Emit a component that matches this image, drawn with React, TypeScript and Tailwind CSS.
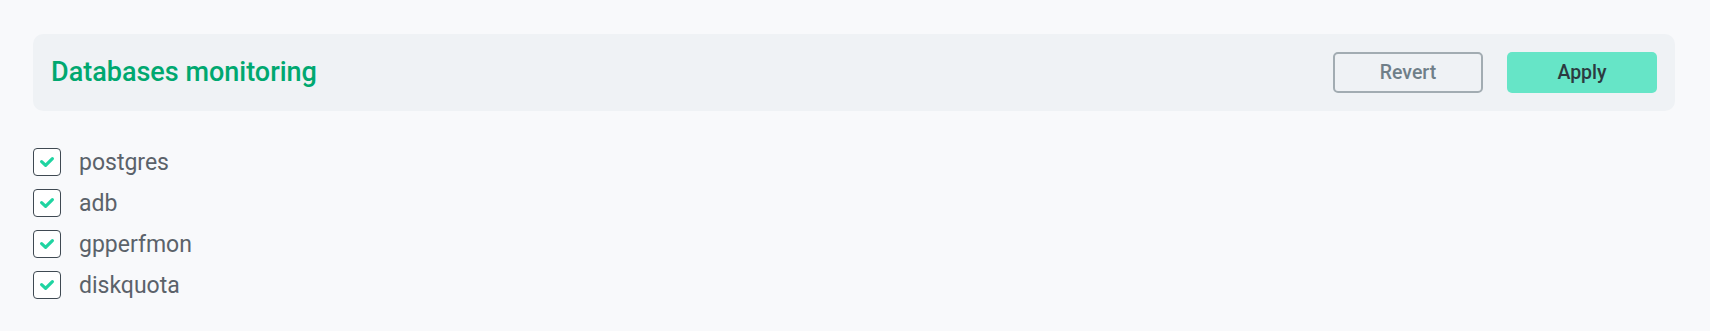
import React, { useState } from 'react';

const initialDatabases = ['postgres', 'adb', 'gpperfmon', 'diskquota'];

function CheckBox({ checked, onToggle }: { checked: boolean; onToggle: () => void }) {
  return (
    <button
      onClick={onToggle}
      className="relative w-[28px] h-[28px] rounded-[4px] border-[1.5px] border-[#3f4952] bg-white shrink-0"
    >
      {checked && (
        <svg
          width="28"
          height="28"
          viewBox="0 0 28 28"
          fill="none"
          className="absolute -left-[1.5px] -top-[1.5px]"
        >
          <path
            d="M8.6 13.6 L12.6 17.4 L19.4 10.6"
            stroke="#1fd4a1"
            strokeWidth="3.2"
            strokeLinecap="round"
            strokeLinejoin="round"
          />
        </svg>
      )}
    </button>
  );
}

export default function App() {
  const [checked, setChecked] = useState<Record<string, boolean>>(
    Object.fromEntries(initialDatabases.map((d) => [d, true]))
  );

  const toggle = (name: string) => {
    setChecked({ ...checked, [name]: !checked[name] });
  };

  return (
    <div
      className="min-h-[331px] bg-[#f8f9fb] pt-[34px] pl-[33px] pr-[35px]"
      style={{ fontFamily: 'Roboto, "Noto Sans", sans-serif' }}
    >
      <div className="h-[77px] rounded-[10px] bg-[#eff2f5] pl-[18px] pr-[18px] flex items-center justify-between">
        <h2 className="text-[27px] font-medium text-[#00a870]">Databases monitoring</h2>
        <div className="flex items-center gap-[24px]">
          <button className="w-[150px] h-[41px] rounded-[5px] border-2 border-[#a2acb2] text-[19.5px] font-medium text-[#6f7f89]">
            Revert
          </button>
          <button className="w-[150px] h-[41px] rounded-[5px] bg-[#66e5c7] text-[19.5px] font-medium text-[#2c3a40]">
            Apply
          </button>
        </div>
      </div>

      <div className="mt-[37px] flex flex-col gap-[13px]">
        {initialDatabases.map((name) => (
          <label key={name} className="flex items-center gap-[18px] h-[28px]">
            <CheckBox checked={checked[name]} onToggle={() => toggle(name)} />
            <span className="text-[23px] text-[#5b626a] pt-[3px]">{name}</span>
          </label>
        ))}
      </div>
    </div>
  );
}
